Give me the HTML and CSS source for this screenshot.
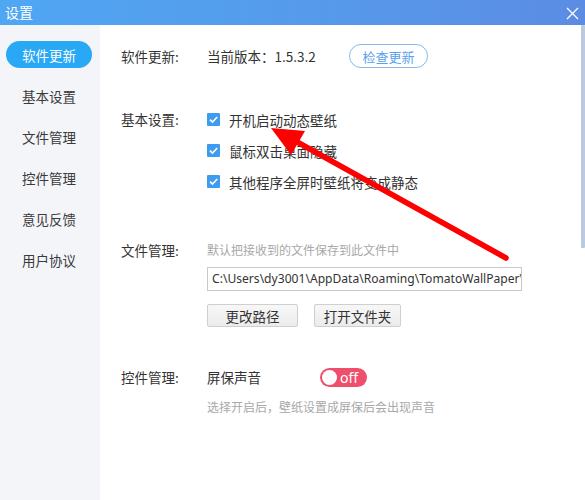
FILE: index.html
```html
<!DOCTYPE html>
<html lang="zh-CN">
<head>
<meta charset="utf-8">
<title>设置</title>
<link rel="stylesheet" href="styles.css">
</head>
<body>
<div class="window">
  <header class="titlebar">
    <span class="title">设置</span>
    <svg class="close" width="13" height="13" viewBox="0 0 13 13"><path d="M1 1L12 12M12 1L1 12" stroke="#fff" stroke-width="1.3" fill="none"/></svg>
  </header>
  <div class="main">
    <nav class="sidebar">
      <div class="nav-item"><span class="pill">软件更新</span></div>
      <div class="nav-item">基本设置</div>
      <div class="nav-item">文件管理</div>
      <div class="nav-item">控件管理</div>
      <div class="nav-item">意见反馈</div>
      <div class="nav-item">用户协议</div>
    </nav>
    <section class="content">
      <div class="sec sec-update">
        <div class="label">软件更新:</div>
        <div class="version">当前版本：1.5.3.2</div>
        <button class="btn-check">检查更新</button>
      </div>

      <div class="sec sec-basic">
        <div class="label row-label">基本设置:</div>
        <div class="checks">
          <div class="check-row"><span class="cb"><svg width="13" height="13" viewBox="0 0 13 13"><path d="M3 6.6L5.5 9L10.2 4" stroke="#fff" stroke-width="1.6" fill="none"/></svg></span>开机启动动态壁纸</div>
          <div class="check-row"><span class="cb"><svg width="13" height="13" viewBox="0 0 13 13"><path d="M3 6.6L5.5 9L10.2 4" stroke="#fff" stroke-width="1.6" fill="none"/></svg></span>鼠标双击桌面隐藏</div>
          <div class="check-row"><span class="cb"><svg width="13" height="13" viewBox="0 0 13 13"><path d="M3 6.6L5.5 9L10.2 4" stroke="#fff" stroke-width="1.6" fill="none"/></svg></span>其他程序全屏时壁纸将变成静态</div>
        </div>
      </div>

      <div class="sec sec-file">
        <div class="label row-label2">文件管理:</div>
        <div class="file-body">
          <div class="hint">默认把接收到的文件保存到此文件中</div>
          <div class="path">C:\Users\dy3001\AppData\Roaming\TomatoWallPaper\</div>
          <div class="btns">
            <button class="btn-gray w1">更改路径</button>
            <button class="btn-gray w2">打开文件夹</button>
          </div>
        </div>
      </div>

      <div class="sec sec-ctrl">
        <div class="label row-label2">控件管理:</div>
        <div class="ctrl-body">
          <div class="ctrl-row">
            <span class="ctrl-name">屏保声音</span>
            <span class="toggle"><span class="knob"></span><span class="off">off</span></span>
          </div>
          <div class="hint hint2">选择开启后，壁纸设置成屏保后会出现声音</div>
        </div>
      </div>
    </section>
  </div>
  <div class="scroll-thumb"></div>
  <svg class="arrow" width="585" height="500" viewBox="0 0 585 500">
    <line x1="506" y1="258" x2="290" y2="138" stroke="#ff0000" stroke-width="5.5" stroke-linecap="round"/>
    <polygon points="271,128 305,131 291,155" fill="#ff0000"/>
  </svg>
</div>
</body>
</html>
```
FILE: styles.css
```css
* { box-sizing: border-box; }
html, body { margin: 0; padding: 0; background: #fff; }
body {
  font-family: "Noto Sans CJK SC", "Noto Sans", sans-serif;
  color: #333;
  width: 585px;
  height: 500px;
  overflow: hidden;
}
.window { position: relative; width: 585px; height: 500px; }
.titlebar {
  height: 25px;
  background: linear-gradient(90deg, #4fa7f3 0%, #5798ea 60%, #5b8ce4 100%);
  display: flex;
  align-items: center;
  justify-content: space-between;
  padding: 0 6px 0 5px;
}
.title { color: #fff; font-size: 14px; line-height: 25px; }
.close { display: block; margin-top: 1px; }
.main { display: flex; height: 475px; }
.sidebar {
  width: 100px;
  background: #f4f5f9;
  padding-top: 9px;
}
.nav-item {
  height: 41px;
  display: flex;
  align-items: center;
  padding-left: 22px;
  font-size: 13.5px;
  color: #3a3a3a;
}
.nav-item:first-child { padding-left: 6px; }
.pill {
  width: 86px;
  height: 27px;
  border-radius: 14px;
  background: #29a8f5;
  color: #fff;
  display: flex;
  align-items: center;
  justify-content: center;
  font-size: 13.5px;
}
.content { flex: 1; padding: 19px 0 0 21px; }
.sec { display: flex; align-items: flex-start; }
.label { width: 86px; font-size: 13.5px; color: #333; flex: none; }
.sec-update { align-items: center; height: 24px; }
.version { font-size: 13.5px; width: 142px; }
.btn-check {
  width: 79px;
  height: 24px;
  border: 1px solid #82baf0;
  border-radius: 12px;
  background: #fff;
  color: #5aa2ea;
  font-family: inherit;
  font-size: 13px;
  padding: 0;
}
.sec-basic { margin-top: 36px; }
.row-label { line-height: 31px; }
.check-row {
  height: 31px;
  display: flex;
  align-items: center;
  font-size: 13.5px;
}
.cb {
  width: 13px;
  height: 13px;
  background: #3d9cef;
  border-radius: 1px;
  margin-right: 9px;
  display: block;
}
.cb svg { display: block; }
.sec-file { margin-top: 43px; }
.row-label2 { line-height: 20px; }
.hint { font-size: 12px; color: #a8a8a8; line-height: 20px; }
.path {
  margin-top: 7px;
  width: 315px;
  height: 24px;
  border: 1px solid #c9c9c9;
  font-family: "Noto Sans", sans-serif;
  font-size: 12.1px;
  line-height: 22px;
  padding-left: 4px;
  white-space: nowrap;
  overflow: hidden;
  color: #333;
}
.btns { display: flex; gap: 16px; margin-top: 13px; }
.btn-gray {
  height: 23px;
  border: 1px solid #cfcfcf;
  border-radius: 2px;
  background: linear-gradient(#f7f7f7, #ececec);
  color: #333;
  font-family: inherit;
  font-size: 13.5px;
  padding: 0;
}
.w1 { width: 91px; }
.w2 { width: 87px; }
.sec-ctrl { margin-top: 40px; }
.ctrl-row { display: flex; align-items: center; height: 20px; }
.ctrl-name { font-size: 13.5px; width: 113px; }
.toggle {
  width: 47px;
  height: 19px;
  border-radius: 10px;
  background: #ee4f6c;
  display: flex;
  align-items: center;
  padding-left: 2px;
}
.knob { width: 15px; height: 15px; border-radius: 50%; background: #fff; }
.off {
  color: #fff;
  font-family: "Noto Sans", sans-serif;
  font-size: 14px;
  margin-left: 3px;
  line-height: 19px;
}
.hint2 { margin-top: 10px; }
.scroll-thumb {
  position: absolute;
  left: 581px;
  top: 25px;
  width: 4px;
  height: 223px;
  background: #bccae0;
  border-radius: 1px;
}
.arrow { position: absolute; left: 0; top: 0; pointer-events: none; }
```
